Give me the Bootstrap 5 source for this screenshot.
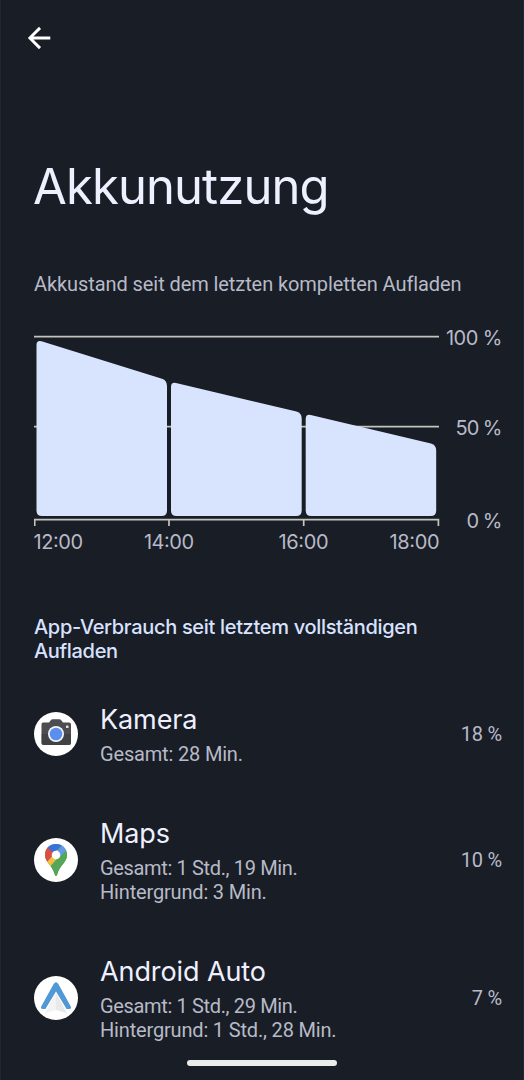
<!DOCTYPE html>
<html lang="de" data-bs-theme="dark">
<head>
<meta charset="utf-8">
<meta name="viewport" content="width=device-width, initial-scale=1">
<title>Akkunutzung</title>
<link href="https://cdn.jsdelivr.net/npm/bootstrap@5.3.0/dist/css/bootstrap.min.css" rel="stylesheet">
<style>
body{background:#191d25;color:#b7bac8;font:400 20px/24px Roboto,"Liberation Sans",sans-serif}
.screen{height:1080px;padding:0 21px 0 33px;border-left:1px solid #22262e;border-right:1px solid #22262e}
.topbar{height:76px}
.back{margin-left:-7px}
.page-title{font:400 49px/60px Inter,sans-serif;letter-spacing:-.9px;color:#eef0ff;margin:81px 0 0 -1px}
.chart-label{margin:55px 0 0;letter-spacing:-.08px}
.chart{margin-top:24px}
.chart text{font:400 20px Inter,sans-serif;fill:#b7bac8}
.grid-line{stroke:#c4c4bf;stroke-width:1.7;fill:none}
.level{fill:#d8e4fd}
.section-title{font:500 20px/24px Inter,sans-serif;letter-spacing:-.32px;color:#d8e2ff;margin:59px 0 0}
.apps{margin-top:41px;gap:51px}
.app-icon{margin-bottom:3px}
.app-name{font:400 27px/32px Inter,sans-serif;letter-spacing:-.1px;color:#eef0ff;margin-bottom:6px}
.app-text{margin-left:22px;letter-spacing:-.17px;margin-bottom:1px}
.total{letter-spacing:-.35px}
.share{letter-spacing:-.2px;margin-bottom:3px}
.home-bar{bottom:14px;width:150px;height:6px;background:#ebebeb}
</style>
</head>
<body>
<main class="screen position-relative overflow-hidden">
  <header class="topbar d-flex align-items-center">
    <a href="#" class="back d-flex" aria-label="Zurück"><svg width="24" height="24" fill="none" stroke="#fff" stroke-width="2.900"><path d="M23.300 12H3M13 1.900 2.900 12 13 22.100"/></svg></a>
  </header>
  <h1 class="page-title">Akkunutzung</h1>
  <p class="chart-label text-nowrap">Akkustand seit dem letzten kompletten Aufladen</p>

  <svg class="chart d-block" width="468" height="236" viewBox="34 320 468 236">
    <path class="grid-line" d="M34 336.700H439M34 426.600H439M34.700 526V519.600H438.400V526M169 519.600V526M303.700 519.600V526"/>
    <path class="level" d="M36.500 345Q36.500 340 41.500 341.200L162 378.800Q167 380.500 167 386V510.500Q167 516 161.500 516H42Q36.500 516 36.500 510.500Z"/>
    <path class="level" d="M171 387Q171 382 176 383L296.500 411.500Q301.700 413 301.700 418.500V510.500Q301.700 516 296.200 516H176.500Q171 516 171 510.500Z"/>
    <path class="level" d="M305.700 419Q305.700 414 310.700 415L431 443.500Q436.200 445 436.200 450.500V510.500Q436.200 516 430.700 516H311.200Q305.700 516 305.700 510.500Z"/>
    <g text-anchor="end">
      <text x="502.500" y="344.500" textLength="56.500">100 %</text>
      <text x="502.500" y="434.500" textLength="47">50 %</text>
      <text x="502.500" y="527.500" textLength="36">0 %</text>
    </g>
    <g>
      <text x="33.500" y="549" textLength="49.500">12:00</text>
      <text x="144" y="549" textLength="50">14:00</text>
      <text x="278.500" y="549" textLength="50">16:00</text>
      <text x="389.500" y="549" textLength="50">18:00</text>
    </g>
  </svg>

  <h2 class="section-title">App-Verbrauch seit letztem vollständigen Aufladen</h2>

  <section class="apps d-flex flex-column">
    <article class="d-flex align-items-center">
      <svg class="app-icon flex-shrink-0" width="44" height="44" viewBox="0 0 44 44">
        <circle cx="22" cy="22" r="22" fill="#fff"/>
        <path fill="#4b4d51" d="M9 10.500h6l2-2.500q.6-.7 1.500-.7h7q.9 0 1.500.7l2 2.500h6q2 0 2 2V31q0 2-2 2H9.500q-2 0-2-2V12.500q0-2 1.500-2Z"/>
        <path fill="#36383b" d="M7.500 22h29.500v9q0 2-2 2H9.500q-2 0-2-2Z" opacity=".5"/>
        <circle cx="22" cy="22" r="8" fill="#f4f5f8"/><circle cx="22" cy="22" r="6.300" fill="#5c8eee"/>
        <rect x="32" y="13.500" width="2.500" height="2.500" rx=".6" fill="#e2e3e5"/>
      </svg>
      <div class="app-text flex-grow-1"><h3 class="app-name">Kamera</h3><div>Gesamt: 28 Min.</div></div>
      <span class="share">18 %</span>
    </article>
    <article class="d-flex align-items-center">
      <svg class="app-icon flex-shrink-0" width="44" height="44" viewBox="0 0 44 44">
        <defs><clipPath id="pin"><path d="M22 6C15.800 6 11 10.700 11 16.900C11 24.500 18.600 27.200 20.800 36.500Q22 39.500 23.200 36.500C25.400 27.200 33 24.500 33 16.900C33 10.700 28.200 6 22 6Z"/></clipPath></defs>
        <circle cx="22" cy="22" r="22" fill="#fff"/>
        <g clip-path="url(#pin)">
          <path fill="#55a657" d="M8 4H36V40H8Z"/>
          <path fill="#f3bd42" d="M8 27 22 11 28 15 14 31Z"/>
          <path fill="#d94f43" d="M8 4 22 14 12 25 8 23Z"/>
          <path fill="#3971dd" d="M12 8.500 20 15 32 3H12Z"/>
          <path fill="#659aea" d="M20 17 30 5 40 12 33 12 25 20Z"/>
          <path fill="#55a657" d="M33 11.500 15 30 22 40H38V11.500Z"/>
        </g>
        <circle cx="22" cy="17" r="4.300" fill="#fff"/>
      </svg>
      <div class="app-text flex-grow-1"><h3 class="app-name">Maps</h3><div class="total">Gesamt: 1 Std., 19 Min.</div><div>Hintergrund: 3 Min.</div></div>
      <span class="share">10 %</span>
    </article>
    <article class="d-flex align-items-center">
      <svg class="app-icon flex-shrink-0" width="44" height="44" viewBox="0 0 44 44">
        <circle cx="22" cy="22" r="22" fill="#fff"/>
        <path fill="#e9e9e9" d="M22 17 33 37.300 22 34Z"/><path fill="#f3f3f3" d="M22 17 11 37.300 22 34Z"/>
        <path fill="#5199d5" d="M7.200 30.500 19.500 8.200Q22 4.400 24.500 8.200L36.800 30.500Q37.600 33 35 33H32.600L22 15.500 11.400 33H9Q6.400 33 7.200 30.500Z"/>
      </svg>
      <div class="app-text flex-grow-1"><h3 class="app-name">Android Auto</h3><div class="total">Gesamt: 1 Std., 29 Min.</div><div>Hintergrund: 1 Std., 28 Min.</div></div>
      <span class="share">7 %</span>
    </article>
  </section>
  <div class="home-bar position-absolute start-50 translate-middle-x rounded-pill"></div>
</main>
<script src="https://cdn.jsdelivr.net/npm/bootstrap@5.3.0/dist/js/bootstrap.bundle.min.js"></script>
</body>
</html>
